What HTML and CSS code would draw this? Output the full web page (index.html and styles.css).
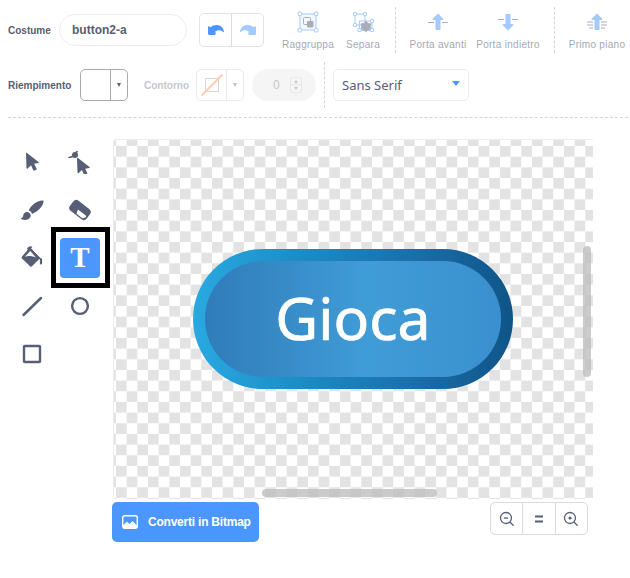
FILE: index.html
```html
<!DOCTYPE html>
<html lang="it">
<head>
    <meta charset="UTF-8">
    <title>Costume</title>
    <link rel="stylesheet" href="styles.css">
</head>
<body>
    <div class="toolbar toolbar-top">
        <label class="label label-costume" for="name">Costume</label>
        <input class="name-input" id="name" type="text" value="button2-a">
        <div class="undo-group">
            <button class="undo-btn">
                <svg width="16" height="10" viewBox="0 0 16 10"><path fill="#4c97ff" d="M0 1.5h1.5c.5 0 1 .3 1.300 .7C4 .9 6 0 8.500 0 12 0 15 2 16 6.500c.1 .6-.5 .9-.9 .5C13.700 5.500 11.500 5 9.500 5.500 8.500 5.800 7.500 6.300 7 7c.5 .4 .8 .7 .8 1.300 0 .9-.6 1.700-1.500 1.700H1.500C.6 10 0 9.300 0 8.500z"/></svg>
            </button>
            <button class="undo-btn">
                <svg class="dim" width="16" height="10" viewBox="0 0 16 10"><path fill="#4c97ff" d="M16 1.500h-1.500c-.5 0-1 .3-1.300 .7C12 .9 10 0 7.500 0 4 0 1 2 0 6.500c-.1 .6 .5 .9 .9 .5C2.300 5.500 4.500 5 6.500 5.500c1 .3 2 .8 2.500 1.500-.5 .4-.8 .7-.8 1.300 0 .9 .6 1.700 1.500 1.700h4.800c.9 0 1.500-.7 1.500-1.500z"/></svg>
            </button>
        </div>
        <div class="mode mode-group">
            <svg width="22" height="22" viewBox="0 0 22 22">
                <rect x="3" y="3" width="16" height="16" fill="#4c97ff" fill-opacity=".12" stroke="#4c97ff"/>
                <rect x="6.500" y="6.500" width="7" height="7" rx="1" fill="none" stroke="#575e75"/>
                <rect x="10" y="10" width="6.500" height="6.500" rx="1" fill="#575e75"/>
                <g fill="#fff" stroke="#4c97ff"><rect x="1" y="1" width="3.500" height="3.500" rx=".7"/><rect x="17.500" y="1" width="3.500" height="3.500" rx=".7"/><rect x="1" y="17.500" width="3.500" height="3.500" rx=".7"/><rect x="17.500" y="17.500" width="3.500" height="3.500" rx=".7"/></g>
            </svg>
            <span>Raggruppa</span>
        </div>
        <div class="mode mode-ungroup">
            <svg width="22" height="22" viewBox="0 0 22 22">
                <path d="M3 3h10v11H3z" fill="none" stroke="#4c97ff"/>
                <rect x="7.500" y="10" width="12.500" height="9.500" fill="none" stroke="#4c97ff"/>
                <path d="M14 9.500l2 2.500 3.500 .5-1 3 1 3-3.500 .5-2 2.500-2-2.500-3.500-.5 1-3-1-3 3.500-.5z" fill="#575e75"/>
                <g fill="#fff" stroke="#4c97ff"><rect x="1.500" y="1.500" width="3" height="3" rx=".6"/><rect x="11.500" y="1.500" width="3" height="3" rx=".6"/><rect x="1.500" y="12.500" width="3" height="3" rx=".6"/><rect x="18.500" y="8.500" width="3" height="3" rx=".6"/><rect x="6" y="17.500" width="3" height="3" rx=".6"/><rect x="18.500" y="17.500" width="3" height="3" rx=".6"/></g>
            </svg>
            <span>Separa</span>
        </div>
        <div class="vdash vdash-first"></div>
        <div class="mode mode-order">
            <svg width="22" height="22" viewBox="0 0 22 22">
                <path d="M1 11.500h6M15 11.500h6" stroke="#575e75" stroke-width="1.200"/>
                <path fill="#4c97ff" d="M11 2.500l5.300 5.300c.4 .4 .1 1.200-.5 1.200h-2.300v9c0 .6-.5 1-1 1h-3c-.5 0-1-.4-1-1V9H6.200c-.6 0-.9-.8-.5-1.200z"/>
            </svg>
            <span>Porta avanti</span>
        </div>
        <div class="mode mode-order">
            <svg width="22" height="22" viewBox="0 0 22 22">
                <path d="M1 8.500h6M15 8.500h6" stroke="#575e75" stroke-width="1.200"/>
                <path fill="#4c97ff" d="M11 19.500l-5.300-5.300c-.4-.4-.1-1.200 .5-1.200h2.300V4c0-.6 .5-1 1-1h3c.5 0 1 .4 1 1v9h2.300c.6 0 .9 .8 .5 1.200z"/>
            </svg>
            <span>Porta indietro</span>
        </div>
        <div class="vdash vdash-second"></div>
        <div class="mode mode-front">
            <svg width="22" height="22" viewBox="0 0 22 22">
                <path d="M1 11h6M15 11h6M1 14h6M15 14h6M3 17h4M15 17h4" stroke="#575e75" stroke-width="1"/>
                <path fill="#4c97ff" d="M11 2.500l5.300 5.300c.4 .4 .1 1.200-.5 1.200h-2.300v9c0 .6-.5 1-1 1h-3c-.5 0-1-.4-1-1V9H6.200c-.6 0-.9-.8-.5-1.200z"/>
            </svg>
            <span>Primo piano</span>
        </div>
    </div>

    <div class="toolbar toolbar-bottom">
        <span class="label label-fill">Riempimento</span>
        <div class="swatch swatch-fill">
            <div class="swatch-color"></div>
            <div class="swatch-arrow"><i class="caret"></i></div>
        </div>
        <span class="label label-off">Contorno</span>
        <div class="swatch swatch-off">
            <div class="swatch-color">
                <svg width="24" height="24" viewBox="0 0 24 24">
                    <rect x="5.500" y="5.500" width="13" height="13" fill="none" stroke="#d5d7dc"/>
                    <path d="M2 22L22 2" stroke="#ffcdb3" stroke-width="2" stroke-linecap="round"/>
                </svg>
            </div>
            <div class="swatch-arrow"><i class="caret"></i></div>
        </div>
        <div class="stroke-num">
            <span>0</span>
            <div class="stepper">
                <div class="step"><i class="step-up"></i></div>
                <div class="step"><i class="step-down"></i></div>
            </div>
        </div>
        <div class="vdash vdash-third"></div>
        <div class="font-select">
            <span>Sans Serif</span>
            <i class="font-caret"></i>
        </div>
    </div>

    <div class="hdash"></div>

    <div class="workspace">
        <div class="tools">
            <button class="tool">
                <svg width="24" height="24" viewBox="0 0 24 24"><path class="ico" d="M6 3.500c0-.6 .5-.8 1-.5l11.500 9c.5 .4 .3 1-.3 1.100l-4 .6 2.400 5c.2 .5 0 .9-.4 1.100l-1.800 .8c-.5 .2-.9 0-1.100-.4l-2.300-5-3.300 3.300c-.5 .4-1.200 .2-1.200-.5z"/></svg>
            </button>
            <button class="tool">
                <svg width="24" height="24" viewBox="0 0 24 24">
                    <path class="ico" d="M9 8.500c0-.6 .5-.8 1-.5l11.500 9c.5 .4 .3 1-.3 1.100l-4 .6 2 4.300c.2 .4 0 .8-.4 1l-1.800 .8c-.5 .2-.9 0-1.100-.4l-2-4.400-3.200 3.100c-.5 .4-1.200 .2-1.200-.5z"/>
                    <circle class="ico" cx="7" cy="5" r="3"/>
                    <path d="M1 7.500c3-.2 6-2.500 8-6" stroke="#575e75" stroke-width="1.600" fill="none" stroke-linecap="round"/>
                </svg>
            </button>
            <button class="tool">
                <svg width="24" height="24" viewBox="0 0 24 24"><path class="ico" d="M23.500 2.500c.4 2.500-1.500 6-4 8.500-2.300 2.300-5 4-7.500 5-.4-1.800-1.500-3-3.300-3.500 1.200-2.800 3-5 5.300-6.800C16.800 3.700 20.500 2 23.500 2.500zM7 14c2 .2 3.500 1.500 3.700 3.300.1 2.300-2.200 4.700-5.500 4.700-2 0-3.700-.5-4.700-1.700 2 0 2.300-1 2.700-2.800C3.500 15.500 5 14 7 14z"/></svg>
            </button>
            <button class="tool">
                <svg width="24" height="24" viewBox="0 0 24 24">
                    <g transform="rotate(38 12 12)">
                        <rect class="ico" x="1.500" y="5.500" width="21" height="13" rx="4"/>
                        <path fill="#fff" d="M10 12.800h10c.5 0 1 .5 1 1v.2c0 1.600-1.200 3-3 3h-6.500z"/>
                    </g>
                </svg>
            </button>
            <button class="tool">
                <svg width="24" height="24" viewBox="0 0 24 24">
                    <path class="ico" d="M10 1L20 12.300 11.700 20.500c-.5 .4-1 .4-1.400 .1L2 12.500c-.6-.6-.6-1.300 0-1.900z"/>
                    <path fill="#fff" d="M5 10.800L10.200 5 16 11.500c-3.500-1.300-7.500-2-11-.7z"/>
                    <path d="M7.500 3.500c1-2.500 3-3 4.500-2M9.500 2.500L21 13.500" stroke="#575e75" stroke-width="1.500" fill="none"/>
                    <path d="M21 13.500v4" stroke="#575e75" stroke-width="2.200" stroke-linecap="round"/>
                </svg>
            </button>
            <button class="tool tool-active"><span class="tool-t">T</span></button>
            <button class="tool">
                <svg width="24" height="24" viewBox="0 0 24 24"><path d="M3.500 21L21 4" stroke="#575e75" stroke-width="2.500" stroke-linecap="round"/></svg>
            </button>
            <button class="tool">
                <svg width="24" height="24" viewBox="0 0 24 24"><circle cx="12" cy="12" r="7.900" fill="none" stroke="#575e75" stroke-width="2.400"/></svg>
            </button>
            <button class="tool">
                <svg width="24" height="24" viewBox="0 0 24 24"><rect x="4" y="4" width="16" height="16" rx=".8" fill="none" stroke="#575e75" stroke-width="2.400"/></svg>
            </button>
        </div>

        <div class="stage">
            <div class="canvas">
                <div class="pill">
                    <div class="pill-inner">Gioca</div>
                </div>
                <div class="scroll scroll-v"></div>
                <div class="scroll scroll-h"></div>
            </div>
            <div class="stage-bottom">
                <button class="bitmap-btn">
                    <svg width="16" height="14" viewBox="0 0 16 14">
                        <rect x=".7" y=".7" width="14.600" height="12.600" rx="2" fill="none" stroke="#fff" stroke-width="1.400"/>
                        <path fill="#fff" d="M1 13v-2.500L5 6.500l2.500 2.500L10.500 6 15 10.500V13z"/>
                    </svg>
                    Converti in Bitmap
                </button>
                <div class="zoom-group">
                    <button class="zoom-btn">
                        <svg width="16" height="16" viewBox="0 0 16 16"><circle cx="7" cy="7" r="5.500" fill="none" stroke="#575e75" stroke-width="1.300"/><path d="M11.200 11.200l3 3" stroke="#575e75" stroke-width="1.300" stroke-linecap="round"/><path d="M5 7h4" stroke="#575e75" stroke-width="1.300"/></svg>
                    </button>
                    <button class="zoom-btn">
                        <svg width="16" height="16" viewBox="0 0 16 16"><path d="M4 5.500h8M4 10.500h8" stroke="#575e75" stroke-width="1.800"/></svg>
                    </button>
                    <button class="zoom-btn">
                        <svg width="16" height="16" viewBox="0 0 16 16"><circle cx="7" cy="7" r="5.500" fill="none" stroke="#575e75" stroke-width="1.300"/><path d="M11.200 11.200l3 3" stroke="#575e75" stroke-width="1.300" stroke-linecap="round"/><circle cx="7" cy="7" r="1.600" fill="#575e75"/></svg>
                    </button>
                </div>
            </div>
        </div>
    </div>
</body>
</html>
```

FILE: styles.css
```css
*{
    margin: 0;
    padding: 0;
    box-sizing: border-box;
}
body{
    width: 630px;
    height: 578px;
    overflow: hidden;
    background-color: #fff;
    color: #575e75;
    font-family: "Liberation Sans", Arial, sans-serif;
}
button{
    border: 0;
    background: none;
    font-family: inherit;
}
svg{
    display: block;
}
.ico{
    fill: #575e75;
}
.dim{
    opacity: .5;
}

/* top rows */
.toolbar{
    display: flex;
    align-items: center;
    height: 46px;
    padding-left: 8px;
}
.toolbar-top{
    margin-top: 7px;
}
.toolbar-bottom{
    margin-top: 9px;
}
.label{
    flex-shrink: 0;
    font-size: 10px;
    font-weight: bold;
    white-space: nowrap;
}
.label-costume{
    width: 43px;
}
.label-fill{
    width: 64px;
}
.label-off{
    width: 44px;
    margin-left: 16px;
    opacity: .35;
}
.name-input{
    width: 128px;
    height: 32px;
    margin-left: 8px;
    padding: 0 12px;
    border: 1px solid #e9eef2;
    border-radius: 16px;
    outline: none;
    color: #575e75;
    font-family: inherit;
    font-size: 12px;
    font-weight: bold;
}
.undo-group{
    display: flex;
    width: 65px;
    height: 34px;
    margin-left: 12px;
    border: 1px solid #e0e3e8;
    border-radius: 5px;
}
.undo-btn{
    display: flex;
    flex: 1;
    align-items: center;
    justify-content: center;
}
.undo-btn:first-child{
    border-right: 1px solid #d9dbe0;
}

.mode{
    display: flex;
    flex-direction: column;
    align-items: center;
    align-self: stretch;
    flex-shrink: 0;
    padding-top: 4px;
    font-size: 10px;
    letter-spacing: .3px;
    color: #575e75;
}
.mode svg{
    opacity: .5;
}
.mode span{
    margin-top: 6px;
    opacity: .55;
    white-space: nowrap;
}
.mode-group{
    width: 60px;
    margin-left: 14px;
}
.mode-ungroup{
    width: 50px;
}
.mode-order{
    width: 70px;
}
.mode-front{
    width: 66px;
}
.vdash{
    align-self: stretch;
    width: 0;
    flex-shrink: 0;
    border-left: 1px dashed #d4d6db;
}
.vdash-first{
    margin: 0 7px;
}
.vdash-second{
    margin: 0 9px 0 11px;
}
.vdash-third{
    margin: 0 8px;
}

/* fill and outline */
.swatch{
    display: flex;
    flex-shrink: 0;
    width: 48px;
    height: 32px;
    margin-left: 8px;
    border: 1px solid #a8aab0;
    border-radius: 5px;
}
.swatch-color{
    display: flex;
    align-items: center;
    justify-content: center;
    width: 30px;
    border-right: 1px solid #a8aab0;
}
.swatch-arrow{
    display: flex;
    flex: 1;
    align-items: center;
    justify-content: center;
}
.caret{
    width: 0;
    height: 0;
    border-left: 2.500px solid transparent;
    border-right: 2.500px solid transparent;
    border-top: 4px solid #575e75;
}
.swatch-off{
    border-color: #e9eaec;
}
.swatch-off .swatch-color{
    border-color: #e9eaec;
}
.swatch-off .caret{
    opacity: .4;
}
.stroke-num{
    display: flex;
    align-items: center;
    gap: 10px;
    width: 64px;
    height: 32px;
    margin-left: 8px;
    padding-left: 21px;
    border-radius: 16px;
    background-color: #f5f5f5;
    font-size: 12px;
    color: #c5c7ce;
}
.stepper{
    width: 12px;
    height: 16px;
    border: 1px solid #e8e8ea;
    border-radius: 2px;
}
.step{
    display: flex;
    align-items: center;
    justify-content: center;
    height: 7px;
}
.step:first-child{
    border-bottom: 1px solid #e8e8ea;
}
.step-up, .step-down{
    width: 0;
    height: 0;
    border-left: 2.500px solid transparent;
    border-right: 2.500px solid transparent;
}
.step-up{
    border-bottom: 3px solid #c5c7ce;
}
.step-down{
    border-top: 3px solid #c5c7ce;
}
.font-select{
    display: flex;
    align-items: center;
    justify-content: space-between;
    width: 136px;
    height: 32px;
    padding: 0 8px;
    border: 1px solid #e9eef2;
    border-radius: 5px;
    font-family: "Noto Sans", sans-serif;
    font-size: 13px;
}
.font-caret{
    width: 0;
    height: 0;
    margin-top: -4px;
    border-left: 4px solid transparent;
    border-right: 4px solid transparent;
    border-top: 5px solid #4c97ff;
}
.hdash{
    height: 0;
    margin: 9px 2px 0 8px;
    border-top: 1px dashed #d4d6db;
}

/* tools and canvas */
.workspace{
    display: flex;
    margin-top: 20px;
    padding-left: 8px;
}
.tools{
    display: grid;
    grid-template-columns: 48px 48px;
    grid-auto-rows: 48px;
    align-content: start;
    justify-items: center;
    align-items: center;
    width: 96px;
    margin-right: 8px;
}
.tool{
    position: relative;
    display: flex;
    align-items: center;
    justify-content: center;
    width: 40px;
    height: 40px;
    border-radius: 4px;
}
.tool-active{
    padding-bottom: 1px;
    background-color: #4c97ff;
}
.tool-active::after{
    content: "";
    position: absolute;
    left: -9px;
    top: -11px;
    box-sizing: border-box;
    width: 59px;
    height: 61px;
    border: 5px solid #000;
}
.tool-t{
    color: #fff;
    font-family: "Liberation Serif", serif;
    font-size: 29px;
    font-weight: bold;
    line-height: 1;
}
.stage{
    width: 476px;
}
.canvas{
    position: relative;
    display: flex;
    align-items: center;
    justify-content: center;
    width: 480px;
    height: 360px;
    margin: 1px 0 3px 1px;
    background-color: #fff;
    background-image: conic-gradient(#fff 25%, #e3e3e3 0 50%, #fff 0 75%, #e3e3e3 0);
    background-size: 21.330px 21.330px;
    background-position: 3px 7px;
    border-radius: 4px 0 0 4px;
    box-shadow: inset 1px 1px 0 #e9eef2;
}
.pill{
    width: 320px;
    height: 140px;
    padding: 12px;
    border-radius: 70px;
    background: linear-gradient(90deg, #29a9e1 0%, #1b8bc4 35%, #1a6ea9 70%, #0f5488 100%);
}
.pill-inner{
    display: flex;
    align-items: center;
    justify-content: center;
    height: 100%;
    padding-bottom: 4px;
    border-radius: 58px;
    background: linear-gradient(90deg, #2f7cb9 0%, #409cd7 55%, #3a90ce 100%);
    color: #fff;
    font-family: "Noto Sans", sans-serif;
    font-size: 59px;
    -webkit-text-stroke: .7px #fff;
}
.scroll{
    position: absolute;
    border-radius: 4px;
    background-color: rgba(190, 190, 190, .8);
}
.scroll-v{
    right: 2px;
    top: 107px;
    width: 8px;
    height: 131px;
}
.scroll-h{
    left: 149px;
    bottom: 2px;
    width: 175px;
    height: 8px;
}
.stage-bottom{
    display: flex;
    align-items: flex-start;
    justify-content: space-between;
}
.bitmap-btn{
    display: flex;
    align-items: center;
    gap: 10px;
    width: 147px;
    height: 40px;
    padding-left: 10px;
    border-radius: 5px;
    background-color: #4c97ff;
    color: #fff;
    font-size: 12px;
    font-weight: bold;
    letter-spacing: -.22px;
    white-space: nowrap;
}
.zoom-group{
    display: flex;
    width: 98px;
    height: 33px;
    border: 1px solid #d9dbe0;
    border-radius: 5px;
}
.zoom-btn{
    display: flex;
    flex: 1;
    align-items: center;
    justify-content: center;
    border-right: 1px solid #d9dbe0;
}
.zoom-btn:last-child{
    border-right: 0;
}
```
